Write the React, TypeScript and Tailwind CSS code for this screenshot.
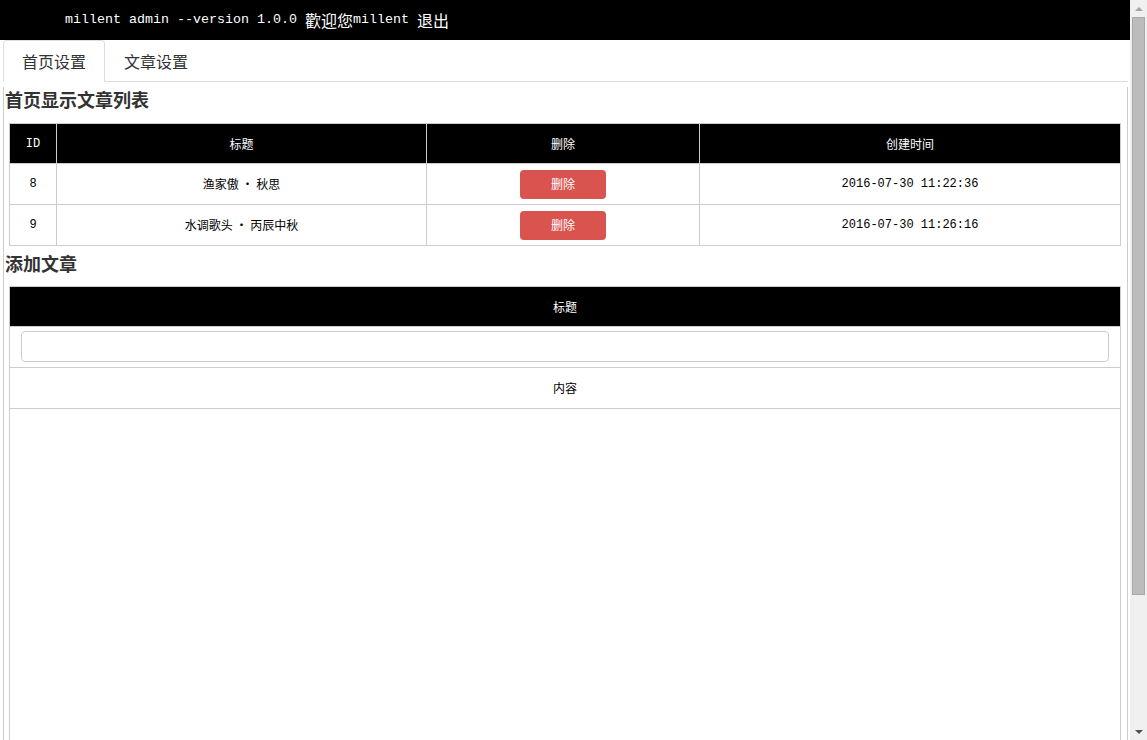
import React from "react";

type Post = { id: number; title: string; created: string };

const posts: Post[] = [
  { id: 8, title: "渔家傲 • 秋思", created: "2016-07-30 11:22:36" },
  { id: 9, title: "水调歌头 • 丙辰中秋", created: "2016-07-30 11:26:16" },
];

const cjk = "font-['Noto_Sans_CJK_SC',sans-serif]";
const mono = "font-['Liberation_Mono','Noto_Sans_CJK_SC',monospace]";

// the reference was shot with a classic windows scrollbar, so draw one
const Scrollbar: React.FC = () => (
  <aside className="sticky top-0 h-screen w-[17px] shrink-0 bg-[#f0f0f0] flex flex-col items-center">
    <div className="h-[17px] w-full flex items-center justify-center">
      <div className="w-0 h-0 border-l-[4px] border-r-[4px] border-b-[4px] border-l-transparent border-r-transparent border-b-[#a3a3a3]" />
    </div>
    <div className="w-[13px] h-[578px] bg-[#bcbcbc] border border-[#a8a8a8]" />
    <div className="flex-1" />
    <div className="h-[17px] w-full flex items-center justify-center">
      <div className="w-0 h-0 border-l-[4px] border-r-[4px] border-t-[4px] border-l-transparent border-r-transparent border-t-[#505050]" />
    </div>
  </aside>
);

const App: React.FC = () => {
  return (
    <div className={`flex min-h-screen bg-white text-black ${cjk}`}>
      <main className="flex-1 min-w-0">
        <header className="h-10 bg-black text-white flex items-center pl-[65px] text-[16px] whitespace-pre">
          <span className={`${mono} text-[13.33px]`}>millent admin --version 1.0.0 </span>
          <span>歡迎您</span>
          <span className={`${mono} text-[13.33px]`}>millent </span>
          <span>退出</span>
        </header>

        <div className="pl-[3px] pr-[2px]">
          <nav className="flex border-b border-[#ddd]">
            <div className="-mb-px h-[42px] px-[18px] flex items-center border border-[#ddd] border-b-white rounded-t-[4px] text-[16px] text-[#333]">
              首页设置
            </div>
            <div className="h-[41px] px-[19px] flex items-center text-[16px] text-[#333]">
              文章设置
            </div>
          </nav>

          <section className="border-l border-r border-[#ccc] pb-10">
            <h2 className="mt-[5px] pl-px h-6 leading-6 text-[18px] font-semibold text-[#333]">首页显示文章列表</h2>
            <table className="mt-[12px] ml-[5px] w-[1112px] border-collapse border border-[#ccc] text-[12px] text-center table-fixed">
              <thead>
                <tr className="bg-black text-white h-10">
                  <th className={`w-[47px] font-normal border border-[#ccc] ${mono}`}>ID</th>
                  <th className="w-[370px] font-normal border border-[#ccc]">标题</th>
                  <th className="w-[273px] font-normal border border-[#ccc]">删除</th>
                  <th className="font-normal border border-[#ccc]">创建时间</th>
                </tr>
              </thead>
              <tbody>
                {posts.map((p) => (
                  <tr key={p.id} className="h-[41px]">
                    <td className={`border border-[#ccc] ${mono}`}>{p.id}</td>
                    <td className="border border-[#ccc]">{p.title}</td>
                    <td className="border border-[#ccc]">
                      <button className="w-[86px] h-[29px] rounded-[4px] bg-[#d9534f] text-white text-[12px]">
                        删除
                      </button>
                    </td>
                    <td className={`border border-[#ccc] ${mono}`}>{p.created}</td>
                  </tr>
                ))}
              </tbody>
            </table>

            <h2 className="mt-[5px] pl-px h-6 leading-6 text-[18px] font-semibold text-[#333]">添加文章</h2>
            <table className="mt-[11px] ml-[5px] w-[1112px] border-collapse border border-[#ccc] text-[12px] text-center">
              <tbody>
                <tr className="bg-black text-white h-10">
                  <th className="font-normal border border-[#ccc]">标题</th>
                </tr>
                <tr className="h-[41px]">
                  <td className="border border-[#ccc] px-[11px] pt-[3px] pb-[5px]">
                    <input
                      type="text"
                      className="block w-full h-[31px] border border-[#ccc] rounded-[4px] outline-none px-3"
                    />
                  </td>
                </tr>
                <tr className="h-[41px]">
                  <td className="border border-[#ccc]">内容</td>
                </tr>
                <tr>
                  <td className="border border-[#ccc] h-[420px]"></td>
                </tr>
              </tbody>
            </table>
          </section>
        </div>
      </main>
      <Scrollbar />
    </div>
  );
};

export default App;
